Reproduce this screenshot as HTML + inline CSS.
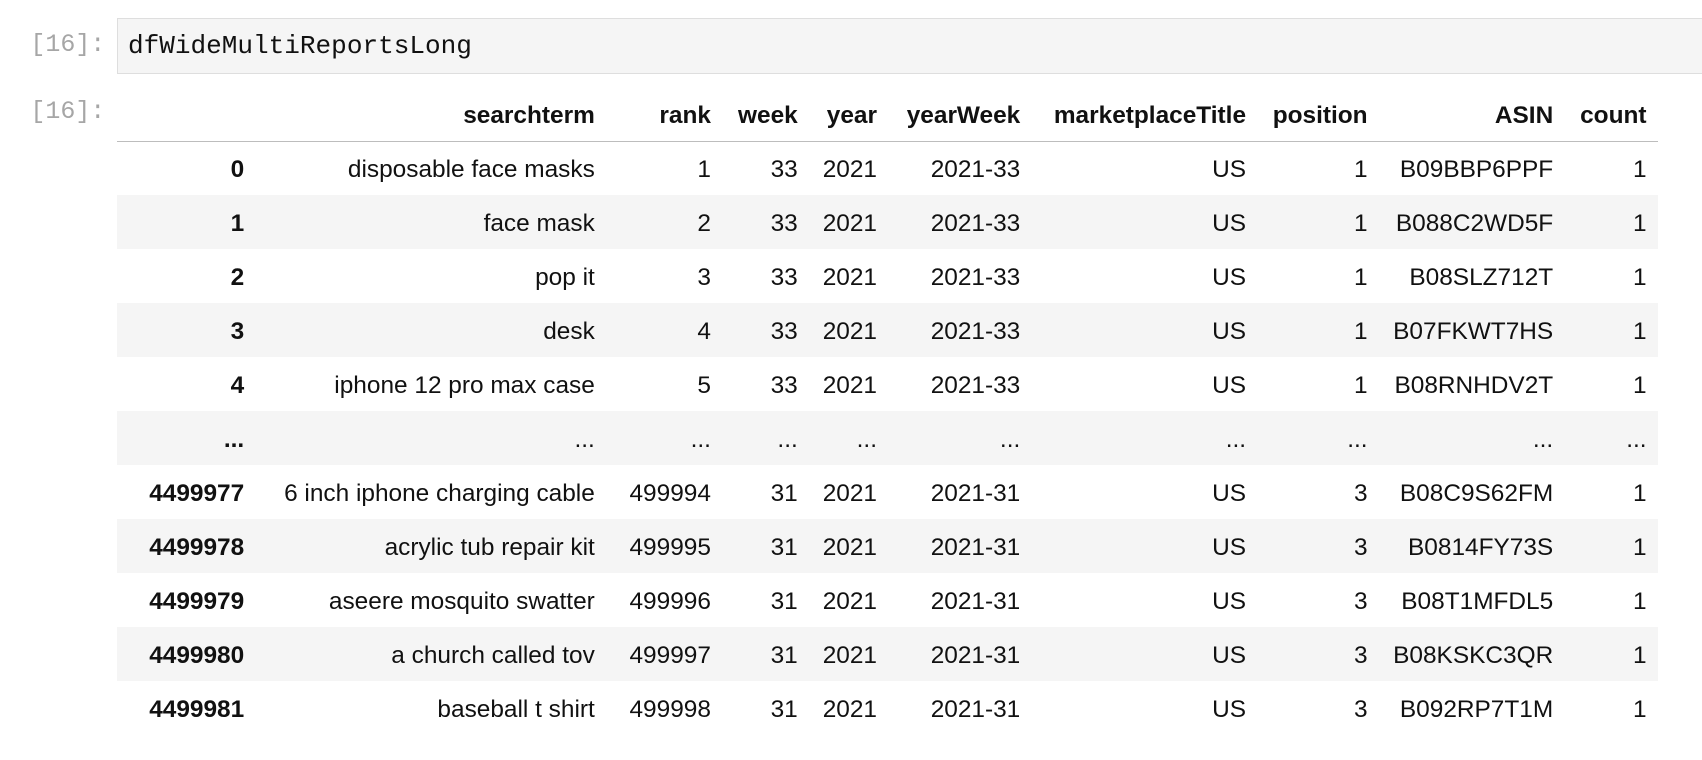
<!DOCTYPE html>
<html><head><meta charset="utf-8"><style>
html,body{margin:0;padding:0;background:#fff;}
body{zoom:1.08546;width:1568px;height:700px;position:relative;overflow:hidden;font-family:"Liberation Sans",Arial,sans-serif;color:#111;}
.p{position:absolute;left:28px;font-family:"Liberation Mono",monospace;font-size:23px;color:#a6a6a6;}
.in{position:absolute;left:108px;top:17px;width:1480px;height:51px;background:#f5f5f5;border:1px solid #dedede;box-sizing:border-box;font-family:"Liberation Mono",monospace;font-size:24px;line-height:51px;padding-left:9px;color:#111;}
table{position:absolute;left:108px;top:81px;border-collapse:collapse;table-layout:fixed;font-size:22.5px;}
td,th{padding:0;text-align:right;height:49.75px;white-space:nowrap;overflow:visible;padding-top:3px;box-sizing:border-box;}
th{font-weight:bold;}
thead th{height:49px;border-bottom:1.5px solid #bdbdbd;}
tbody tr:nth-child(even){background:#f5f5f5;}
tbody th{font-weight:bold;}
td:last-child,th:last-child{padding-right:11px;}
</style></head><body>
<div class="p" style="top:29px">[16]:</div>
<div class="in">dfWideMultiReportsLong</div>
<div class="p" style="top:90px">[16]:</div>
<table>
<colgroup><col style="width:117px"><col style="width:323px"><col style="width:107px"><col style="width:80px"><col style="width:73px"><col style="width:132px"><col style="width:208px"><col style="width:112px"><col style="width:171px"><col style="width:97px"></colgroup>
<thead><tr><th></th><th>searchterm</th><th>rank</th><th>week</th><th>year</th><th>yearWeek</th><th>marketplaceTitle</th><th>position</th><th>ASIN</th><th>count</th></tr></thead>
<tbody>
<tr><th>0</th><td>disposable face masks</td><td>1</td><td>33</td><td>2021</td><td>2021-33</td><td>US</td><td>1</td><td>B09BBP6PPF</td><td>1</td></tr>
<tr><th>1</th><td>face mask</td><td>2</td><td>33</td><td>2021</td><td>2021-33</td><td>US</td><td>1</td><td>B088C2WD5F</td><td>1</td></tr>
<tr><th>2</th><td>pop it</td><td>3</td><td>33</td><td>2021</td><td>2021-33</td><td>US</td><td>1</td><td>B08SLZ712T</td><td>1</td></tr>
<tr><th>3</th><td>desk</td><td>4</td><td>33</td><td>2021</td><td>2021-33</td><td>US</td><td>1</td><td>B07FKWT7HS</td><td>1</td></tr>
<tr><th>4</th><td>iphone 12 pro max case</td><td>5</td><td>33</td><td>2021</td><td>2021-33</td><td>US</td><td>1</td><td>B08RNHDV2T</td><td>1</td></tr>
<tr><th>...</th><td>...</td><td>...</td><td>...</td><td>...</td><td>...</td><td>...</td><td>...</td><td>...</td><td>...</td></tr>
<tr><th>4499977</th><td>6 inch iphone charging cable</td><td>499994</td><td>31</td><td>2021</td><td>2021-31</td><td>US</td><td>3</td><td>B08C9S62FM</td><td>1</td></tr>
<tr><th>4499978</th><td>acrylic tub repair kit</td><td>499995</td><td>31</td><td>2021</td><td>2021-31</td><td>US</td><td>3</td><td>B0814FY73S</td><td>1</td></tr>
<tr><th>4499979</th><td>aseere mosquito swatter</td><td>499996</td><td>31</td><td>2021</td><td>2021-31</td><td>US</td><td>3</td><td>B08T1MFDL5</td><td>1</td></tr>
<tr><th>4499980</th><td>a church called tov</td><td>499997</td><td>31</td><td>2021</td><td>2021-31</td><td>US</td><td>3</td><td>B08KSKC3QR</td><td>1</td></tr>
<tr><th>4499981</th><td>baseball t shirt</td><td>499998</td><td>31</td><td>2021</td><td>2021-31</td><td>US</td><td>3</td><td>B092RP7T1M</td><td>1</td></tr>
</tbody></table>
</body></html>
